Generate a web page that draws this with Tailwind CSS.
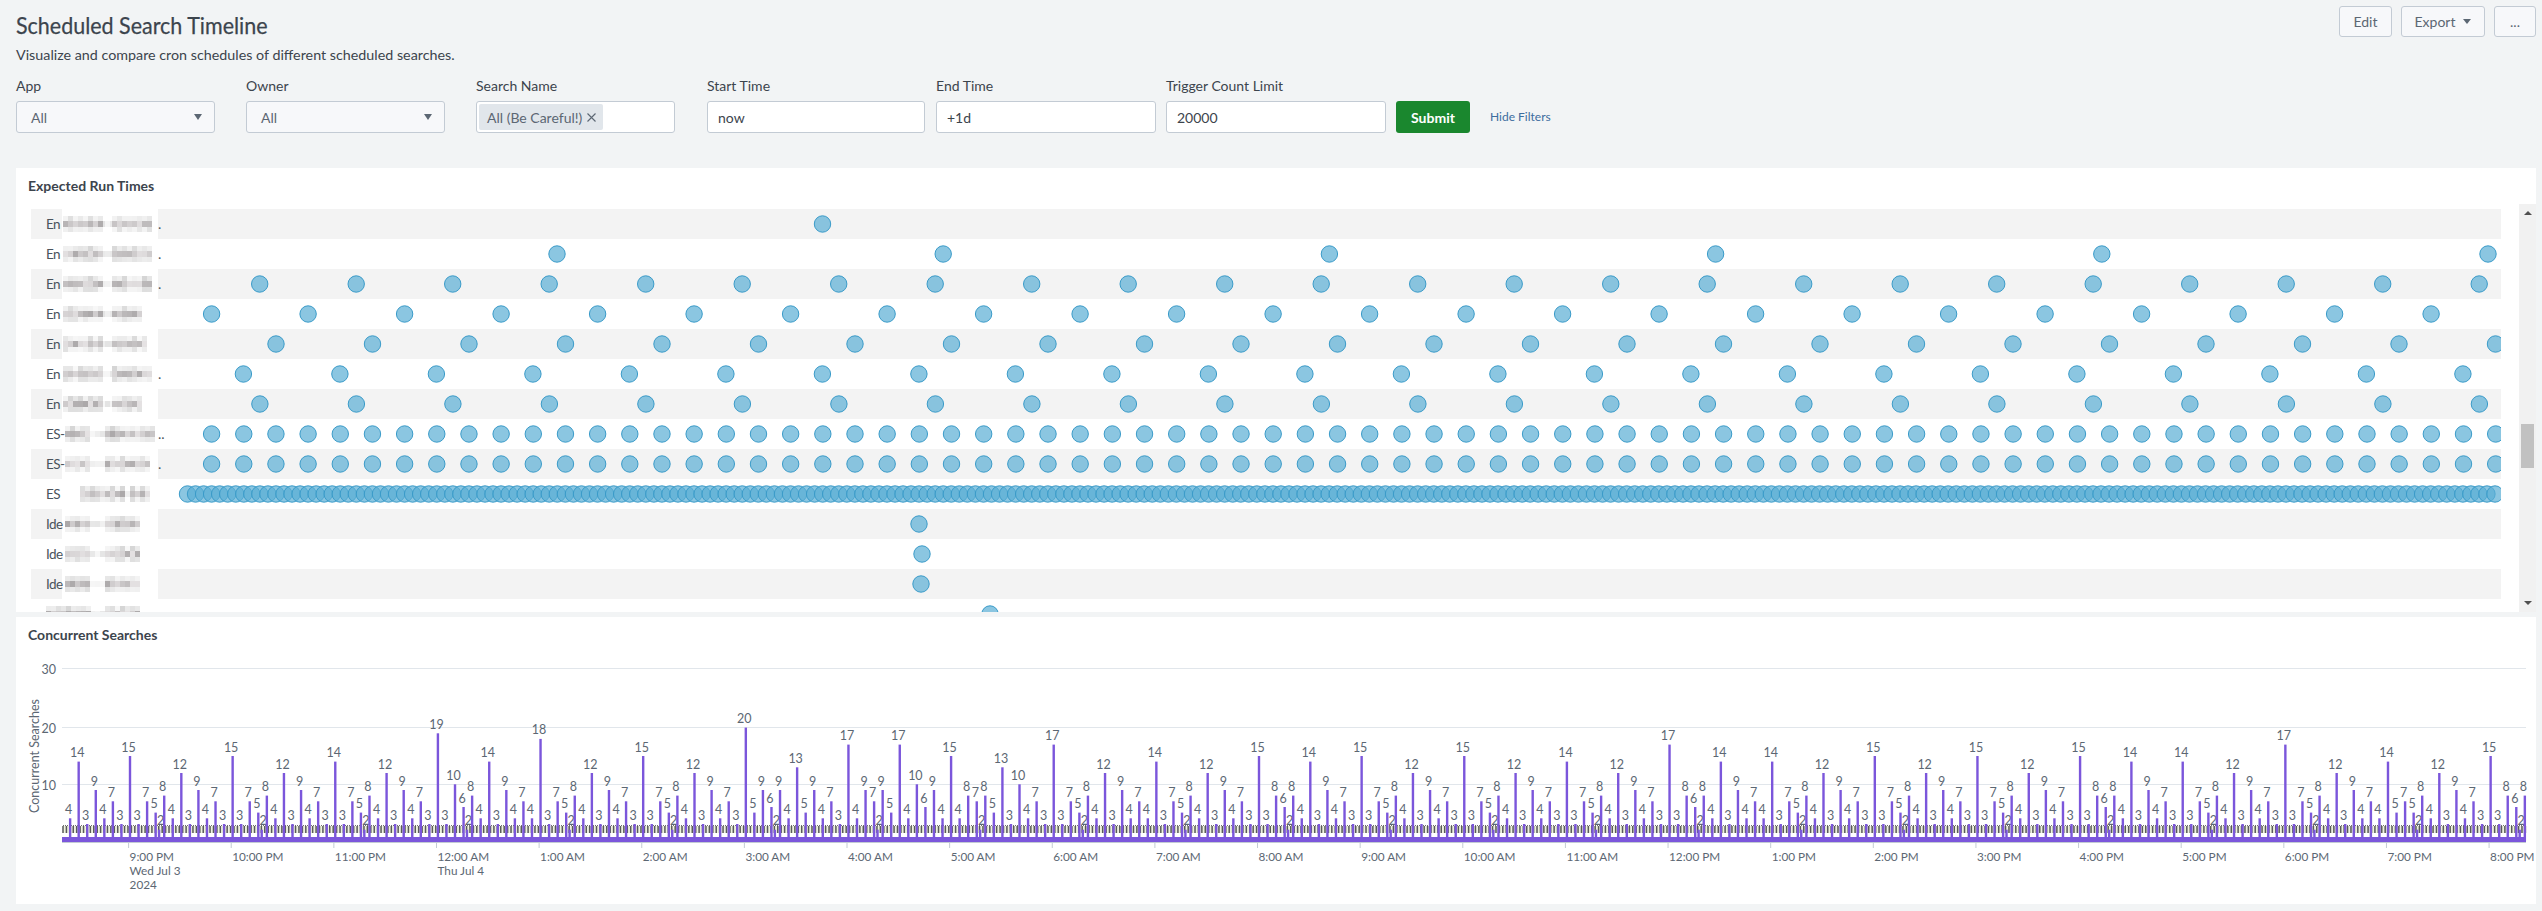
<!DOCTYPE html>
<html lang="en">
<head>
    <meta charset="UTF-8">
    <title>Scheduled Search Timeline</title>
    <script src="https://cdn.jsdelivr.net/npm/@tailwindcss/browser@4"></script>
</head>
<body class="bg-[#f2f4f5] w-[2542px] h-[911px] overflow-hidden font-['Lato','Liberation_Sans',sans-serif] text-[#3c444d]">
    <!-- header -->
    <div class="flex justify-between h-[65px]">
        <div class="pl-[16px] pt-[10px]">
            <h1 class="text-[24px] leading-[30px] font-normal origin-left scale-x-[0.895] [-webkit-text-stroke:0.25px]">Scheduled Search Timeline</h1>
            <p class="text-[14.3px] leading-[20px] mt-[5px]">Visualize and compare cron schedules of different scheduled searches.</p>
        </div>
        <div class="flex gap-[9px] pt-[6px] pr-[6px] text-[14px] text-[#5c6773]">
            <button class="w-[53px] h-[31px] bg-[#f7f8fa] border border-[#c3cbd4] rounded-[3px]">Edit</button>
            <button class="w-[84px] h-[31px] bg-[#f7f8fa] border border-[#c3cbd4] rounded-[3px] flex items-center justify-center gap-[8px]">Export
                <svg width="8" height="5" viewBox="0 0 8 5"><path d="M0 0h8L4 5z" fill="#5c6773"/></svg>
            </button>
            <button class="w-[42px] h-[31px] bg-[#f7f8fa] border border-[#c3cbd4] rounded-[3px]">...</button>
        </div>
    </div>

    <!-- filters -->
    <div class="flex items-end mt-[11px] pl-[16px] text-[14px]">
        <div class="w-[199px]">
            <label class="block leading-[20px] mb-[5px]">App</label>
            <div class="h-[32px] bg-[#f7f8fa] border border-[#c3cbd4] rounded-[3px] flex items-center justify-between pl-[14px] pr-[12px] text-[#5c6773]">All
                <svg width="8" height="6" viewBox="0 0 8 6"><path d="M0 0h8L4 6z" fill="#5c6773"/></svg>
            </div>
        </div>
        <div class="w-[199px] ml-[31px]">
            <label class="block leading-[20px] mb-[5px]">Owner</label>
            <div class="h-[32px] bg-[#f7f8fa] border border-[#c3cbd4] rounded-[3px] flex items-center justify-between pl-[14px] pr-[12px] text-[#5c6773]">All
                <svg width="8" height="6" viewBox="0 0 8 6"><path d="M0 0h8L4 6z" fill="#5c6773"/></svg>
            </div>
        </div>
        <div class="w-[199px] ml-[31px]">
            <label class="block leading-[20px] mb-[5px]">Search Name</label>
            <div class="h-[32px] bg-white border border-[#c3cbd4] rounded-[3px] flex items-center pl-[2px]">
                <span class="h-[26px] w-[124px] bg-[#e1e6eb] rounded-[2px] flex items-center pl-[8px] gap-[5px] text-[#5c6773]">All (Be Careful!)
                    <svg width="9" height="9" viewBox="0 0 9 9"><path d="M.5.5l8 8M8.5.5l-8 8" stroke="#5c6773" stroke-width="1.1" fill="none"/></svg>
                </span>
            </div>
        </div>
        <div class="w-[218px] ml-[32px]">
            <label class="block leading-[20px] mb-[5px]">Start Time</label>
            <div class="h-[32px] bg-white border border-[#c3cbd4] rounded-[3px] flex items-center pl-[10px]">now</div>
        </div>
        <div class="w-[220px] ml-[11px]">
            <label class="block leading-[20px] mb-[5px]">End Time</label>
            <div class="h-[32px] bg-white border border-[#c3cbd4] rounded-[3px] flex items-center pl-[10px]">+1d</div>
        </div>
        <div class="w-[220px] ml-[10px]">
            <label class="block leading-[20px] mb-[5px]">Trigger Count Limit</label>
            <div class="h-[32px] bg-white border border-[#c3cbd4] rounded-[3px] flex items-center pl-[10px]">20000</div>
        </div>
        <button class="w-[74px] h-[32px] ml-[10px] bg-[#1a872e] rounded-[3px] text-white font-bold">Submit</button>
        <a class="ml-[20px] h-[32px] flex items-center text-[12px] text-[#3d6d9e]">Hide Filters</a>
    </div>

    <!-- expected run times -->
    <section class="ml-[16px] w-[2520px] h-[444px] mt-[35px] bg-white">
        <h2 class="h-[36px] pl-[12px] pt-[8px] text-[14px] leading-[20px] font-bold">Expected Run Times</h2>
        <div class="flex h-[408px]">
            <div id="rows" class="ml-[15px] w-[2470px] pt-[5px] overflow-hidden"></div>
            <div class="ml-[18px] w-[17px] bg-[#f1f1f1] flex flex-col items-center relative">
                <svg class="mt-[7px]" width="8" height="4" viewBox="0 0 8 4"><path d="M0 4h8L4 0z" fill="#505050"/></svg>
                <div class="absolute top-[220px] left-[2px] w-[13px] h-[44px] bg-[#c1c1c1]"></div>
                <svg class="mt-auto mb-[7px]" width="8" height="4" viewBox="0 0 8 4"><path d="M0 0h8L4 4z" fill="#505050"/></svg>
            </div>
        </div>
    </section>

    <!-- concurrent searches -->
    <section class="ml-[16px] w-[2520px] h-[287px] mt-[5px] bg-white relative">
        <h2 class="absolute left-[12px] top-[8px] text-[14px] leading-[20px] font-bold">Concurrent Searches</h2>
        <svg id="chart" width="2520" height="287" viewBox="16 617 2520 287" class="block" font-size="12.5" fill="#5c6773"></svg>
    </section>

    <script>
        // row labels: shown prefix, the tail behind the mosaic, mosaic blobs [from, to] in page px
        const rowDefs = [
            ['En', '.', [[63, 100], [112, 152]], [[822.5, 0, 1]]],
            ['En', '.', [[63, 100], [112, 152]], [[557, 386.2, 6]]],
            ['En', '.', [[63, 100], [112, 152]], [[259.7, 96.5, 24]]],
            ['En', '', [[63, 100], [112, 140]], [[211.6, 96.5, 24]]],
            ['En', '', [[63, 100], [112, 146]], [[276, 96.5, 24]]],
            ['En', '.', [[63, 100], [112, 152]], [[243.4, 96.5, 24]]],
            ['En', '', [[63, 100], [112, 142]], [[259.9, 96.5, 24]]],
            ['ES-', '..', [[65, 90], [105, 155]], [[211.6, 32.17, 72]]],
            ['ES-', '.', [[65, 90], [105, 150]], [[211.6, 32.17, 72]]],
            ['ES', '', [[80, 125], [130, 150]], [[187.5, 8.04, 288]]],
            ['Ide', '', [[65, 90], [105, 136]], [[919, 0, 1]]],
            ['Ide', '', [[65, 90], [105, 136]], [[922, 0, 1]]],
            ['Ide', '', [[65, 90], [105, 136]], [[921, 0, 1]]],
            ['', '', [[46, 90], [105, 136]], [[990, 0, 1]]],
        ];

        let seed = 7;
        function rand() {
            seed = (seed * 16807) % 2147483647;
            return seed / 2147483647;
        }

        function mosaic(blobs) {
            let out = '<rect x="62" y="0" width="96" height="30" fill="#fff" fill-opacity=".96"/>';
            // faint bridge between the two words
            const [first, second] = blobs;
            for (let x = first[1]; x < second[0]; x += 5) {
                const g = 228 + Math.floor(rand() * 20);
                out += `<rect x="${x}" y="12" width="5" height="6" fill="rgb(${g},${g},${g})"/>`;
            }
            blobs.forEach(([a, b]) => {
                for (let x = a; x < b; x += 5) {
                    const c = 172 + Math.floor(rand() * 58);
                    const d = 208 + Math.floor(rand() * 36);
                    out += `<rect x="${x}" y="12" width="5" height="6" fill="rgb(${c},${c - 3},${c - 2})"/>`;
                    out += `<rect x="${x}" y="7" width="5" height="5" fill="rgb(${d},${d},${d})" fill-opacity="${x % 2 ? .55 : .9}"/>`;
                    out += `<rect x="${x}" y="18" width="5" height="5" fill="rgb(${d},${d},${d})" fill-opacity=".7"/>`;
                }
            });
            return out;
        }

        const rowsEl = document.getElementById('rows');
        rowDefs.forEach((def, i) => {
            const [prefix, tail, blobs, series] = def;
            let dots = '';
            series.forEach(([start, step, count]) => {
                for (let k = 0; k < count; k++) {
                    dots += `<circle cx="${start + step * k}" cy="15" r="8.2" fill="#5aaed4" fill-opacity=".7" stroke="#3a9bc9" stroke-width="1"/>`;
                }
            });
            const row = document.createElement('div');
            row.className = i % 2 === 0 ? 'relative h-[30px] bg-[#f3f3f3]' : 'relative h-[30px] bg-white';
            row.innerHTML = `
                <svg class="absolute left-0 top-0" width="2470" height="30" viewBox="31 0 2470 30">${mosaic(blobs)}${dots}</svg>
                <span class="absolute left-[15px] top-[5px] whitespace-nowrap text-[13.5px] leading-[20px] tracking-[-0.6px] text-[#4a535c]">${prefix}</span>
                <span class="absolute left-[127px] top-[5px] text-[14px] leading-[20px] text-[#4a535c]">${tail}</span>`;
            rowsEl.appendChild(row);
        });

        // one array per hour, twelve 5 minute slots, starting at 9:00 PM
        const common = [3, 7, 5, 8, 4, 12, 3, 9, 4, 7, 3];
        const hours = [
            [15, ...common],
            [15, ...common],
            [14, ...common],
            [19, 3, 10, 6, 8, 4, 14, 3, 9, 4, 7, 4],
            [18, ...common],
            [15, ...common],
            [20, 5, 9, 6, 9, 4, 13, 5, 9, 4, 7, 3],
            [17, 4, 9, 7, 9, 5, 17, 4, 10, 6, 9, 4],
            [15, 4, 8, 7, 8, 5, 13, 3, 10, 4, 7, 3],
            [17, 3, 7, 5, 8, 4, 12, 3, 9, 4, 7, 4],
            [14, ...common],
            [15, 3, 8, 6, 8, 4, 14, 3, 9, 4, 7, 3],
            [15, ...common],
            [15, ...common],
            [14, ...common],
            [17, 3, 8, 6, 8, 4, 14, 3, 9, 4, 7, 4],
            [14, ...common],
            [15, ...common],
            [15, ...common],
            [15, 3, 8, 6, 8, 4, 14, 3, 9, 4, 7, 3],
            [14, 3, 7, 5, 8, 4, 12, 3, 9, 4, 7, 3],
            [17, 3, 7, 5, 8, 4, 12, 3, 9, 4, 7, 4],
            [14, 5, 7, 5, 8, 4, 12, 3, 9, 4, 7, 3],
            [15, 3, 8, 6, 8],
        ];
        const lead = [4, 14, 3, 9, 4, 7, 3]; // the slots before the first tick
        const tickNames = ['9:00 PM', '10:00 PM', '11:00 PM', '12:00 AM', '1:00 AM', '2:00 AM', '3:00 AM', '4:00 AM', '5:00 AM', '6:00 AM', '7:00 AM', '8:00 AM', '9:00 AM', '10:00 AM', '11:00 AM', '12:00 PM', '1:00 PM', '2:00 PM', '3:00 PM', '4:00 PM', '5:00 PM', '6:00 PM', '7:00 PM', '8:00 PM'];

        const SLOT = 8.553, X0 = 130, Y0 = 841, UNIT = 5.67, TOP = 62, RIGHT = 2526;
        let svg = '';

        // gridlines and y labels
        [[30, 668.5], [20, 727.5], [10, 784.5]].forEach(([v, y]) => {
            svg += `<line x1="${TOP}" x2="${RIGHT}" y1="${y}" y2="${y}" stroke="#e1e6eb" stroke-width="1.2"/>`;
            svg += `<text x="56" y="${y + 5}" text-anchor="end">${v}</text>`;
        });
        svg += `<text transform="translate(39 756) rotate(-90)" text-anchor="middle" font-size="12.5">Concurrent Searches</text>`;

        // the crowd of "1" labels near the bottom
        svg += `<rect x="63" y="826" width="${RIGHT - 63}" height="7" fill="#eef2de"/>`;
        let hatch = '';
        for (let x = 63; x < RIGHT; x += 3.42) hatch += `M${x.toFixed(2)} 826V833`;
        svg += `<path d="${hatch}" stroke="#5a5a5a" stroke-width="1.5" fill="none"/>`;
        svg += `<line x1="63" x2="${RIGHT}" y1="825.5" y2="825.5" stroke="#707070" stroke-dasharray="1 1"/>`;

        // bars and their labels
        function bar(x, v, labelDx) {
            svg += `<rect x="${(x - 1.2).toFixed(2)}" y="${(Y0 - v * UNIT).toFixed(1)}" width="2.4" height="${(v * UNIT).toFixed(1)}" fill="#7b56db"/>`;
            svg += `<text x="${(x - 1.5 + labelDx).toFixed(2)}" y="${(Y0 - v * UNIT - 4.5).toFixed(1)}" text-anchor="middle">${v}</text>`;
        }
        lead.forEach((v, k) => bar(X0 - SLOT * (7 - k), v, 0));
        hours.forEach((values, h) => {
            values.forEach((v, k) => {
                const x = X0 + SLOT * (h * 12 + k);
                bar(x, v, 0);
                // short 2s that follow the xx:15 slot
                if (k === 3) bar(x + 3.4, 2, 3);
            });
        });

        // band at the bottom, axis and ticks
        svg += `<rect x="${TOP}" y="837" width="${RIGHT - TOP}" height="5" fill="#7b56db"/>`;
        svg += `<line x1="${TOP}" x2="${RIGHT}" y1="842.5" y2="842.5" stroke="#c3cbd4" stroke-width="1"/>`;
        tickNames.forEach((name, i) => {
            const x = 128.6 + 102.63 * i;
            svg += `<line x1="${x}" x2="${x}" y1="842" y2="848" stroke="#c3cbd4"/>`;
            svg += `<text x="${x + 1}" y="861" font-size="11.75">${name}</text>`;
        });
        svg += `<text x="129.6" y="875" font-size="11.75">Wed Jul 3</text><text x="129.6" y="889" font-size="11.75">2024</text>`;
        svg += `<text x="437.5" y="875" font-size="11.75">Thu Jul 4</text>`;

        document.getElementById('chart').innerHTML = svg;
    </script>
</body>
</html>
